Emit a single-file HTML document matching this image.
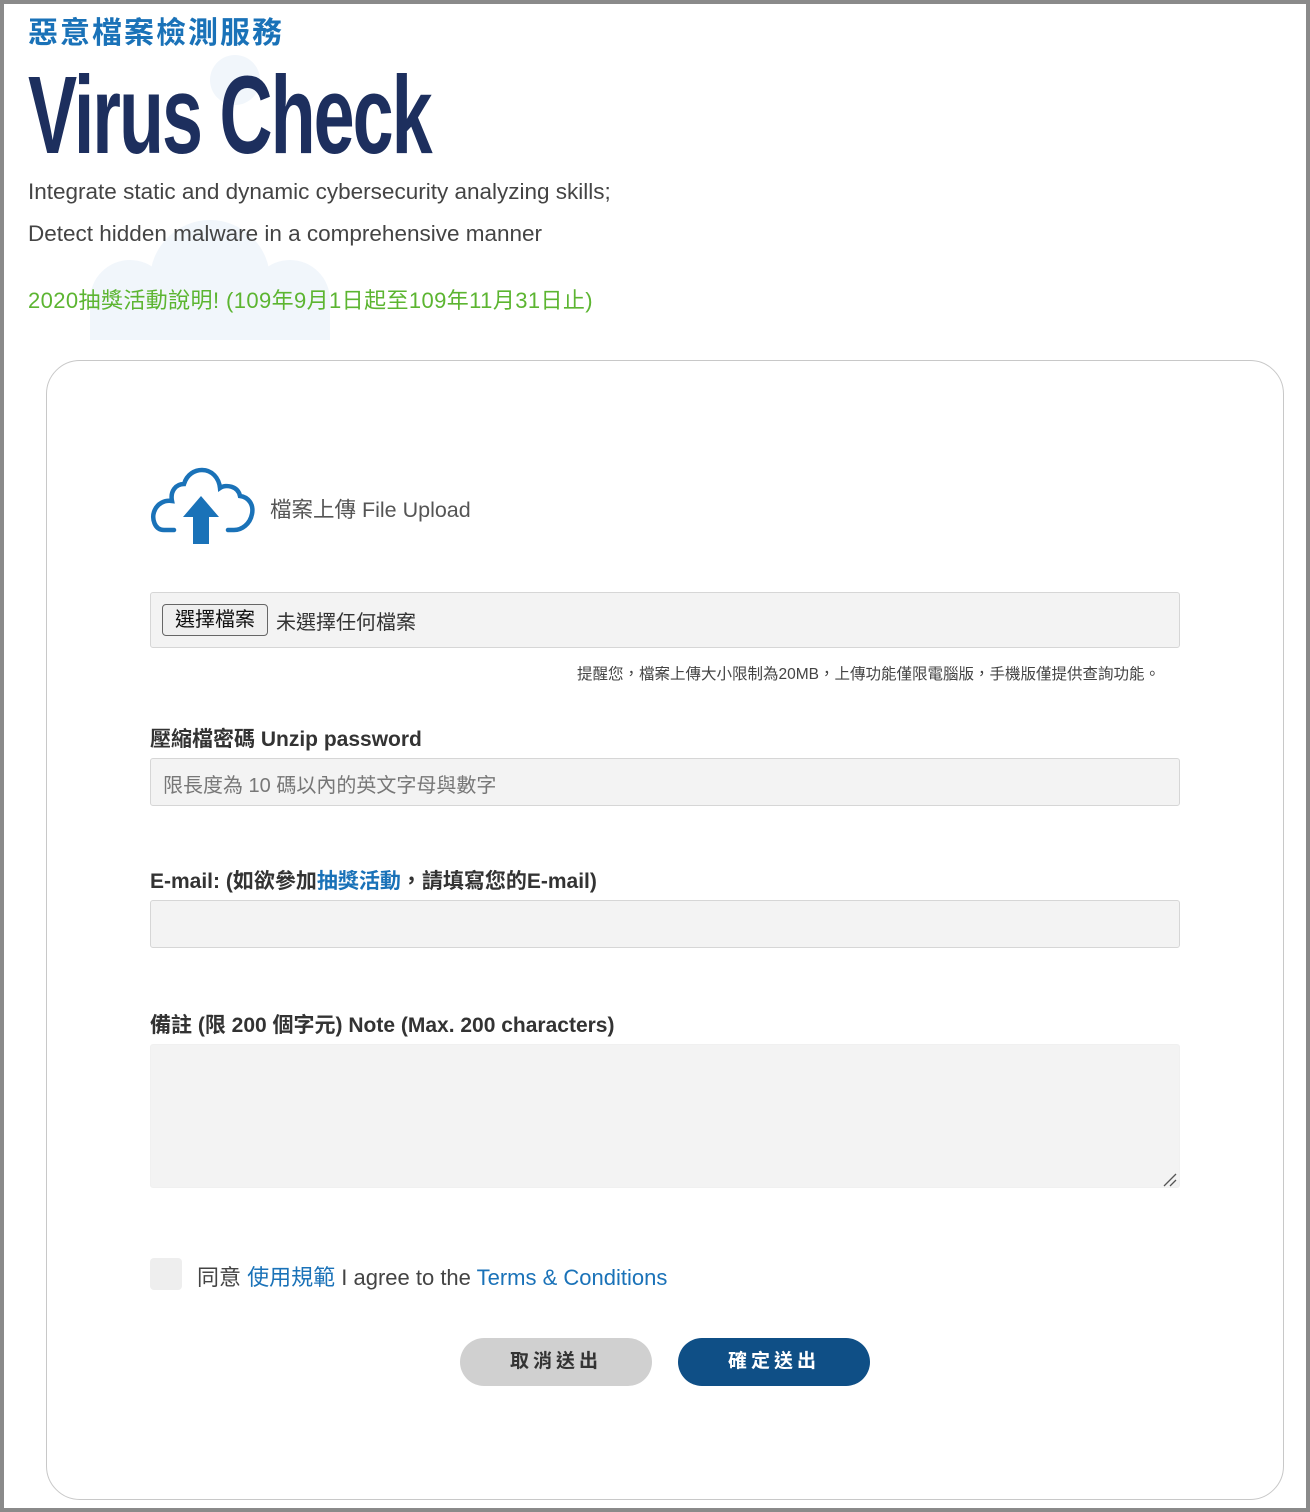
<!DOCTYPE html>
<html><head><meta charset="utf-8"><style>
html,body{margin:0;padding:0}
body{width:1310px;height:1512px;background:#fff;font-family:"Liberation Sans","Noto Sans CJK TC",sans-serif;position:relative;overflow:hidden}
.frame{position:absolute;left:0;top:0;width:1302px;height:1504px;border:4px solid #8a8a8a;border-bottom-width:4px}
.abs{position:absolute;white-space:nowrap}
.h1{left:28px;top:8px;font-size:30px;font-weight:bold;color:#1a72b8;letter-spacing:2px}
.vc{left:28px;top:52px;font-family:"Liberation Sans Narrow","Liberation Sans",sans-serif;font-weight:bold;font-size:110px;color:#1d2f5e;transform-origin:0 0;transform:scaleX(0.67);letter-spacing:-3px}
.sub{left:28px;font-size:22.5px;color:#444}
.green{left:28px;top:283px;font-size:22px;color:#5cb531;letter-spacing:0.4px}
.card{position:absolute;left:46px;top:360px;width:1236px;height:1138px;border:1.5px solid #c8c8c8;border-radius:34px;background:#fff}
.lbl{font-size:21px;color:#333;font-weight:bold}
.box{position:absolute;left:150px;width:1028px;background:#f3f3f3;border:1px solid #d6d6d6;border-radius:3px}
.btn{position:absolute;top:1338px;width:192px;height:48px;border-radius:24px;text-align:center;line-height:48px;font-size:19px;font-weight:bold;letter-spacing:4px}
</style></head><body>
<div class="frame"></div>
<svg class="abs" style="left:40px;top:40px" width="340" height="300"><g fill="#f1f6fb"><circle cx="90" cy="260" r="40"/><circle cx="170" cy="240" r="60"/><circle cx="250" cy="260" r="40"/><rect x="50" y="260" width="240" height="60"/><circle cx="195" cy="40" r="25"/></g></svg>
<div class="abs h1">惡意檔案檢測服務</div>
<div class="abs vc">Virus Check</div>
<div class="abs sub" style="top:179px">Integrate static and dynamic cybersecurity analyzing skills;</div>
<div class="abs sub" style="top:221px">Detect hidden malware in a comprehensive manner</div>
<div class="abs green">2020抽獎活動說明! (109年9月1日起至109年11月31日止)</div>
<div class="card"></div>
<svg class="abs" style="left:150px;top:466px" width="106" height="82" viewBox="0 0 106 82">
<path d="M24 64 H14 C4 64 2 52 4 46 C7 37 15 34 22 35 C20 25 26 18 34 18 C37 8 45 4 52 4 C62 4 69 12 70 22 C76 18 88 20 90 30 C98 31 104 38 102 48 C100 58 92 64 84 64 H78" fill="none" stroke="#1a72b8" stroke-width="4.5" stroke-linecap="round"/>
<path d="M51 30 L69 51 H59 V78 H43 V51 H33 Z" fill="#1a72b8"/>
</svg>
<div class="abs" style="left:270px;top:493px;font-size:21.5px;color:#555">檔案上傳 File Upload</div>
<div class="box" style="top:592px;height:54px"></div>
<div class="abs" style="left:162px;top:604px;width:104px;height:30px;border:1.5px solid #666;border-radius:4px;background:#efefef;font-size:20px;line-height:30px;text-align:center;color:#111">選擇檔案</div>
<div class="abs" style="left:276px;top:606px;font-size:20px;color:#333">未選擇任何檔案</div>
<div class="abs" style="left:577px;top:662px;font-size:15.5px;color:#444">提醒您，檔案上傳大小限制為20MB，上傳功能僅限電腦版，手機版僅提供查詢功能。</div>
<div class="abs lbl" style="left:150px;top:723px">壓縮檔密碼 Unzip password</div>
<div class="box" style="top:758px;height:46px"></div>
<div class="abs" style="left:163px;top:769px;font-size:20px;color:#777">限長度為 10 碼以內的英文字母與數字</div>
<div class="abs lbl" style="left:150px;top:865px">E-mail: (如欲參加<span style="color:#1a72b8">抽獎活動</span>，請填寫您的E-mail)</div>
<div class="box" style="top:900px;height:46px"></div>
<div class="abs lbl" style="left:150px;top:1009px">備註 (限 200 個字元) Note (Max. 200 characters)</div>
<div class="box" style="top:1044px;height:142px;border-color:#f0f0f0"></div>
<svg class="abs" style="left:1162px;top:1172px" width="16" height="16"><path d="M2 14 L14 2 M8 14 L14 8" stroke="#555" stroke-width="1.3"/></svg>
<div class="abs" style="left:150px;top:1258px;width:32px;height:32px;background:#eee;border-radius:4px"></div>
<div class="abs" style="left:197px;top:1260px;font-size:22px;color:#444">同意 <span style="color:#1a72b8">使用規範</span> I agree to the <span style="color:#1a72b8">Terms &amp; Conditions</span></div>
<div class="btn" style="left:460px;background:#d0d0d0;color:#333">取消送出</div>
<div class="btn" style="left:678px;background:#0f4f86;color:#fff">確定送出</div>
</body></html>
